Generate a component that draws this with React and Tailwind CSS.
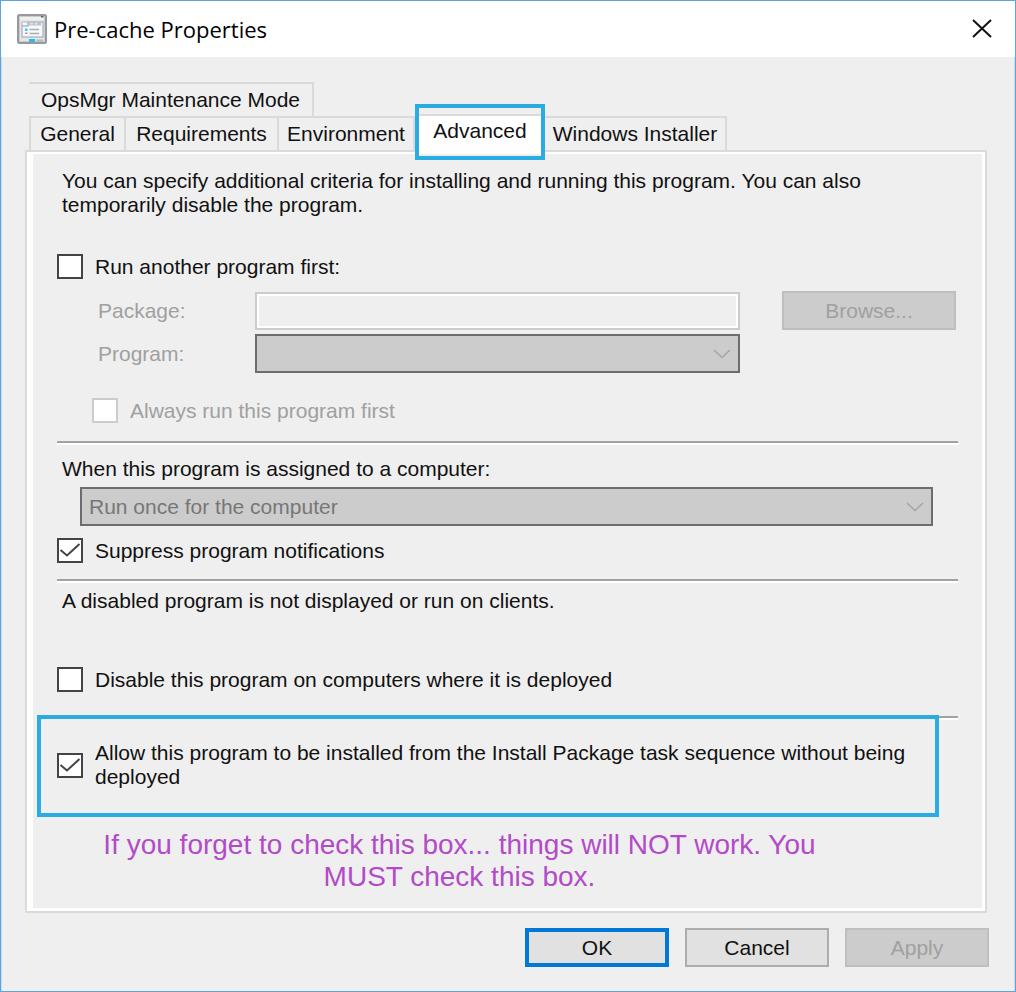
import React from "react";

function AppIcon() {
  return (
    <svg className="size-[30px] shrink-0" viewBox="0 0 30 30" aria-hidden="true">
      <rect x="1" y="1" width="28" height="28" rx="1.5" fill="#e4e5e7" stroke="#97999c" strokeWidth="2" />
      <rect x="2.500" y="2.500" width="25" height="25" fill="none" stroke="#c9cbcd" />
      <path d="M3 3h24v3H3z" fill="#eef0f0" />
      <path d="M24 2h2.500v1.500H24z" fill="#506878" />
      <path d="M5 8h6v4H5z" fill="#f5f7fa" stroke="#b4bac6" />
      <path d="M5 12h6V8h15v15H5z" fill="#f7f9fb" stroke="#b4bac6" strokeWidth="1.500" />
      <path d="M11 8h13v3.500H11z" fill="#bcc2cd" />
      <path d="M13 9h3v1.500h-3zM17.500 9h3v1.500h-3z" fill="#dde2ea" />
      <path d="M8 14.500h2.500V17H8z" fill="#35c9ef" />
      <path d="M8 18.500h2.500V20H8z" fill="#9aa5af" />
      <path d="M12.500 15.500H22M12.500 19.500H22" stroke="#a8aeb5" strokeWidth="1.500" />
      <path d="M12 25h6v3h-6z" fill="#25bdea" />
      <path d="M19.500 25.500H26v2h-6.500z" fill="#b3b8bb" />
    </svg>
  );
}

function Tab({ children, className = "" }) {
  return (
    <button
      type="button"
      role="tab"
      aria-selected="false"
      className={`h-[34px] border-t-2 border-r-2 border-[#dadada] text-center whitespace-nowrap ${className}`}
    >
      {children}
    </button>
  );
}

function Check({ id, disabled, defaultChecked, children, className = "" }) {
  return (
    <div className={`flex items-center gap-3 ${className}`}>
      <span className="relative flex shrink-0">
        <input
          id={id}
          type="checkbox"
          disabled={disabled}
          defaultChecked={defaultChecked}
          className="peer h-[25px] w-[26px] appearance-none border-2 border-[#444] bg-white disabled:border-[#ccc]"
        />
        <svg
          className="pointer-events-none absolute inset-0 hidden h-[25px] w-[26px] peer-checked:block"
          viewBox="0 0 26 25"
          fill="none"
          stroke="#444"
          strokeWidth="2"
          aria-hidden="true"
        >
          <path d="M3.500 12l6.500 5.500L22.500 6" />
        </svg>
      </span>
      <label htmlFor={id} className={disabled ? "text-[#a0a0a0]" : ""}>
        {children}
      </label>
    </div>
  );
}

function Combo({ id, option, className = "" }) {
  return (
    <div className={`relative ${className}`}>
      <select
        id={id}
        disabled
        className="block h-[39px] w-full appearance-none border-2 border-[#6d6d6d] bg-[#ccc] px-[7px] text-[#777] opacity-100"
      >
        <option>{option}</option>
      </select>
      <svg
        className="pointer-events-none absolute top-[15px] right-[9px] h-[10px] w-[18px]"
        viewBox="0 0 18 10"
        fill="none"
        stroke="#a6a6a6"
        strokeWidth="1.600"
        aria-hidden="true"
      >
        <path d="M1 1l8 7.500L17 1" />
      </svg>
    </div>
  );
}

function Divider({ className = "" }) {
  return <hr className={`mr-6 ml-5 h-1 border-t-2 border-b-2 border-t-[#a2a2a2] border-b-white ${className}`} />;
}

export default function App() {
  return (
    <div className="min-h-screen border border-[#5aa5e2] bg-[#efefef] font-['Liberation_Sans',Arial,sans-serif] text-[21px] leading-6 text-[#111]">
      <header className="flex h-14 items-center bg-white pr-[23px] pl-4">
        <AppIcon />
        <h1 className="ml-[7px] flex-1 font-['Open_Sans','Noto_Sans',sans-serif] text-[22px] text-black">
          Pre-cache Properties
        </h1>
        <button type="button" aria-label="Close">
          <svg className="size-5" viewBox="0 0 20 20" stroke="#111" strokeWidth="2" aria-hidden="true">
            <path d="M1 1l18 17M19 1L1 18" />
          </svg>
        </button>
      </header>

      <main className="border-x border-[#c2dcf0] pt-[25px] pr-[25px] pl-[23px]">
        <div role="tablist" className="pl-1">
          <div className="flex">
            <Tab className="w-[285px]">OpsMgr Maintenance Mode</Tab>
          </div>
          <div className="flex">
            <div className="flex border-l-2 border-[#dadada]">
              <Tab className="w-[95px]">General</Tab>
              <Tab className="w-[153px]">Requirements</Tab>
              <Tab className="w-[136px]">Environment</Tab>
            </div>
            <button
              type="button"
              role="tab"
              aria-selected="true"
              className="relative z-10 -mt-3 -mb-[10px] h-14 w-[130px] border-4 border-[#2aabe2] bg-[#efefef]"
            >
              <span className="mt-1 block h-10 border-t-2 border-[#dadada] bg-white pt-[3px]">Advanced</span>
            </button>
            <Tab className="w-[182px]">Windows Installer</Tab>
          </div>
        </div>

        <section className="mr-[2px] border-2 border-[#dadada] bg-white pt-[2px] pr-[3px] pb-[3px] pl-1.5">
          <div className="bg-[#efefef] pt-[15px] pb-[15px] pl-1">
            <p className="mr-20 ml-[25px]">
              You can specify additional criteria for installing and running this program. You can also temporarily
              disable the program.
            </p>

            <Check id="run-first" className="mt-[37px] ml-5">
              Run another program first:
            </Check>
            <div className="mt-3 mr-[26px] ml-[61px] grid grid-cols-[157px_1fr_216px] items-center gap-y-1 text-[#a0a0a0]">
              <label htmlFor="package">Package:</label>
              <input
                id="package"
                type="text"
                disabled
                className="h-[38px] w-full border-2 border-[#ccc] bg-[#efefef] px-2 outline-2 -outline-offset-4 outline-white"
              />
              <button type="button" disabled className="h-[39px] w-[174px] justify-self-end border-2 border-[#bfbfbf] bg-[#ccc]">
                Browse...
              </button>
              <label htmlFor="program">Program:</label>
              <Combo id="program" option="" />
            </div>
            <Check id="always-first" disabled className="mt-[25px] ml-[55px]">
              Always run this program first
            </Check>

            <Divider className="mt-[18px]" />
            <label htmlFor="assigned" className="mt-3 ml-[25px] block">
              When this program is assigned to a computer:
            </label>
            <Combo id="assigned" option="Run once for the computer" className="mt-[6px] mr-[49px] ml-[43px]" />
            <Check id="suppress" defaultChecked className="mt-3 ml-5">
              Suppress program notifications
            </Check>

            <Divider className="mt-4" />
            <p className="mt-[6px] ml-[25px]">A disabled program is not displayed or run on clients.</p>
            <Check id="disable" className="mt-[54px] ml-5">
              Disable this program on computers where it is deployed
            </Check>

            <Divider className="mt-6" />
            <div className="relative -mt-[5px] mr-[43px] border-4 border-[#2aabe2] bg-[#efefef] pt-[22px] pr-4 pb-6 pl-4">
              <Check id="allow" defaultChecked>
                Allow this program to be installed from the Install Package task sequence without being deployed
              </Check>
            </div>
            <p className="mt-3 mr-[100px] px-14 text-center text-[28px] leading-8 text-[#b24bc8]">
              If you forget to check this box... things will NOT work. You MUST check this box.
            </p>
          </div>
        </section>

        <footer className="flex justify-end gap-4 pt-[15px] pb-6">
          <button type="button" className="h-[39px] w-36 border-4 border-[#0078d7] bg-[#e1e1e1]">
            OK
          </button>
          <button type="button" className="h-[39px] w-36 border-2 border-[#adadad] bg-[#e1e1e1]">
            Cancel
          </button>
          <button type="button" disabled className="h-[39px] w-36 border-2 border-[#bfbfbf] bg-[#ccc] text-[#a0a0a0]">
            Apply
          </button>
        </footer>
      </main>
    </div>
  );
}
